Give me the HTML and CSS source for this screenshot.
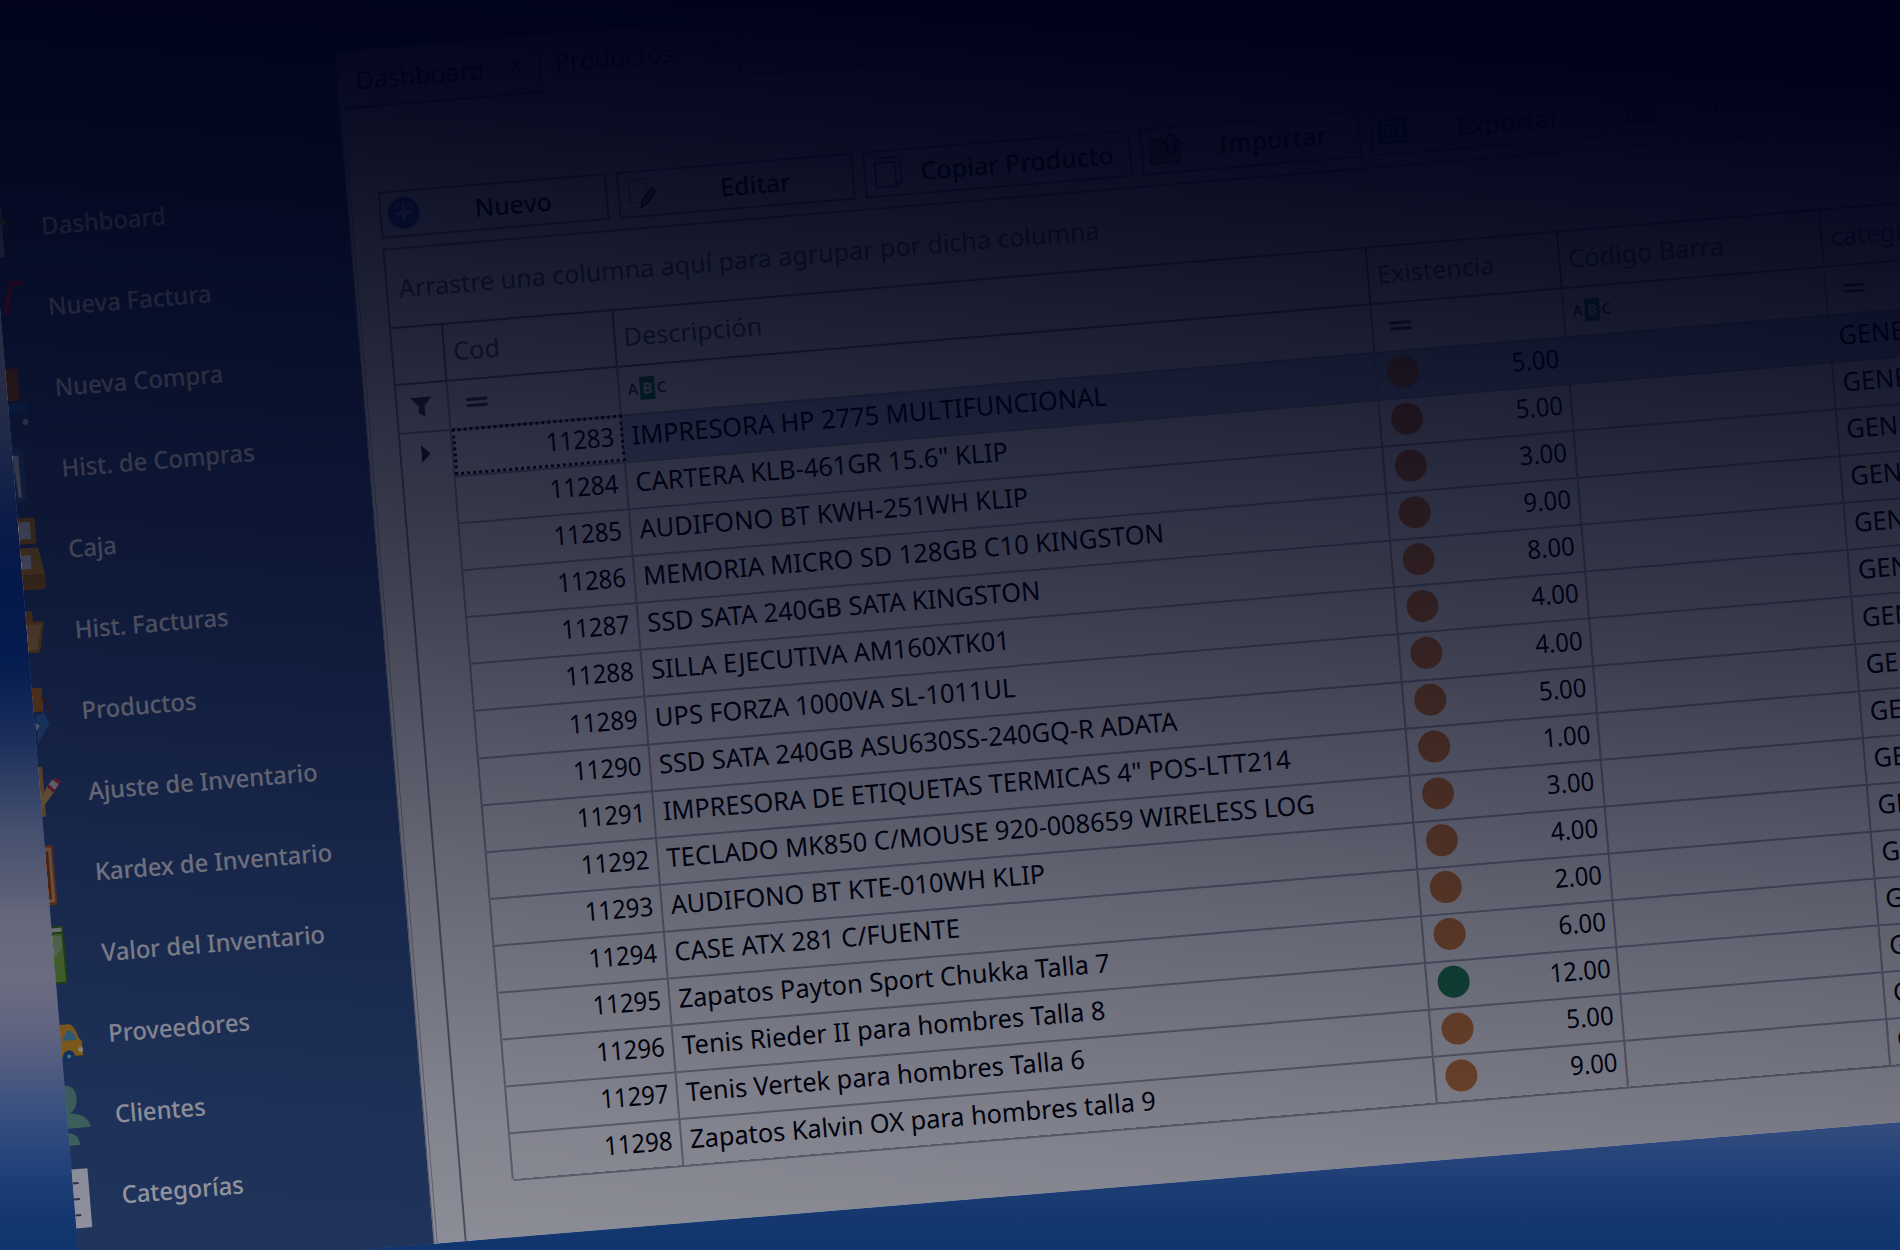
FILE: index.html
```html
<!DOCTYPE html>
<html lang="es">
<head>
<meta charset="utf-8">
<title>Productos</title>
<link rel="stylesheet" href="styles.css">
</head>
<body>
<div class="stage">
<div class="frame">
  <nav class="sidebar">
    <a class="item"><svg class="ico" viewBox="0 0 30 60"><path fill="#d5d9e2" d="M0 6h9v52H0z"/><path fill="#9aa638" d="M0 17l4-3 11 10-3 4-12-10z"/></svg><span>Dashboard</span></a>
    <a class="item"><svg class="ico" viewBox="0 0 30 60"><path fill="none" stroke="#f0303a" stroke-width="5" d="M24 4H13L5 34"/></svg><span>Nueva Factura</span></a>
    <a class="item"><svg class="ico" viewBox="0 0 30 60"><path fill="#c86e14" d="M0 8h12v32H0z"/><path fill="#2f6fc0" d="M0 42h20l-3 12H0z"/><circle cx="16" cy="62" r="3" fill="#dde"/></svg><span>Nueva Compra</span></a>
    <a class="item"><svg class="ico" viewBox="0 0 30 60"><path fill="#3b74ac" d="M0 6h11v54H0z"/><path fill="#eef" d="M0 14h6v42H3z"/></svg><span>Hist. de Compras</span></a>
    <a class="item"><svg class="ico" viewBox="0 0 30 60"><path fill="#d08a20" d="M0-4h17v26H0z"/><path fill="#e8ecf5" d="M0 0h12v17H0z"/><path fill="#d9992c" d="M0 26h18l5 27H0z"/><path fill="#e8ecf5" d="M0 33h10v14H0z"/><path fill="#b87818" d="M0 53h23v11q0 4-4 4H0z"/></svg><span>Caja</span></a>
    <a class="item"><svg class="ico" viewBox="0 0 30 60"><path fill="#c8811c" d="M0 8h7v12H0zM0 19h18l-6 29q-1 2-3 2H0z"/><path fill="#e8a850" d="M0 22h15l-6 25H0z"/></svg><span>Hist. Facturas</span></a>
    <a class="item"><svg class="ico" viewBox="0 0 30 60"><path fill="#d9821c" d="M0 4h10v24H0z"/><path fill="none" stroke="#7a3c30" stroke-width="2" d="M9 14q9 3 6 14"/><path fill="#3f83cc" d="M2 32l8-3 5 12-13 18z"/><path fill="#e8eef5" d="M1 39l4 3-4 5z"/></svg><span>Productos</span></a>
    <a class="item"><svg class="ico" viewBox="0 0 30 60"><path fill="#dca04a" d="M0 2h4v50H0z"/><path fill="#e8bb5a" d="M0 34l8-13 7 6L2 42z"/><path fill="#d83a3a" d="M7 22l9-8 6 5-9 10z"/><path fill="#e8e8ee" d="M9 20l4-4 6 5-4 5z"/></svg><span>Ajuste de Inventario</span></a>
    <a class="item"><svg class="ico" viewBox="0 0 30 60"><path fill="#b5651c" d="M0 0h8v60H0z"/><path fill="#e8b060" d="M0 2h6v55H0z"/><path fill="#a04818" d="M0 6h3v48H0z"/></svg><span>Kardex de Inventario</span></a>
    <a class="item"><svg class="ico" viewBox="0 0 30 60"><path fill="#3f7a1c" d="M0 0h12v58H0z"/><path fill="#84b83c" d="M0 8h10v48H0z"/><path fill="#dfe8d5" d="M0 2h10v4H0z"/><path fill="#a8c880" d="M0 10h9v12L0 33z"/></svg><span>Valor del Inventario</span></a>
    <a class="item"><svg class="ico" viewBox="0 0 30 60"><path fill="#eda41c" d="M0 18h9q5 0 9 14l3 4v14H0z"/><path fill="#5aa8c0" d="M1 34l6-10h3q4 2 6 10z"/><circle cx="7" cy="50" r="6" fill="#1c5a9c"/><circle cx="7" cy="50" r="2" fill="#9cc"/><circle cx="19" cy="44" r="2.5" fill="#fff0c0"/></svg><span>Proveedores</span></a>
    <a class="item"><svg class="ico" viewBox="0 0 30 60"><path fill="#6ca890" d="M0-2h3q8 2 8 13T3 26q18 2 20 15H0zM0 46h3q7 2 8 12H0z"/></svg><span>Clientes</span></a>
    <a class="item"><svg class="ico" viewBox="0 0 30 60"><path fill="#f4f4fc" d="M0 1h16v59H0z"/><path stroke="#4a5070" stroke-width="2" d="M0 15h6M0 31h6M0 47h6"/></svg><span>Categorías</span></a>
  </nav>
  <main class="panel">
    <div class="tabs">
      <div class="tab tab-a"><span>Dashboard</span><svg viewBox="0 0 12 14"><path d="M1 1l10 12M11 1L1 13"/></svg></div>
      <div class="tab tab-b"><span>Productos</span><svg viewBox="0 0 12 14"><path d="M1 1l10 12M11 1L1 13"/></svg></div>
      <div class="tab-rest"></div>
    </div>
    <div class="toolbar">
      <button class="btn b1"><svg viewBox="0 0 36 36"><circle cx="18" cy="18" r="17" fill="#4a7ad8"/><circle cx="18" cy="18" r="14" fill="none" stroke="#1d3f9c" stroke-width="1.5"/><path fill="#8fb0f0" stroke="#1d3f9c" stroke-width="1.5" d="M15 8h6v7h7v6h-7v7h-6v-7H8v-6h7z"/></svg><span>Nuevo</span></button>
      <button class="btn b2"><svg viewBox="0 0 36 36"><path fill="none" stroke="#8a90a8" stroke-width="1.5" d="M24 14V3H5v25h9"/><path fill="#8a7a68" stroke="#111" stroke-width="1.5" d="M16 33l2-7 11-13 4 4-11 13z"/></svg><span>Editar</span></button>
      <button class="btn b3"><svg viewBox="0 0 36 36"><path fill="none" stroke="#3a4160" stroke-width="1.5" d="M11 6V2h15l6 6v22h-6M5 7h21v26H5z"/></svg><span>Copiar Producto</span></button>
      <button class="btn b4"><svg viewBox="0 0 36 36"><path fill="#c88090" stroke="#402030" d="M2 6h14v8h17v18H2z"/><path fill="#a8b8d8" stroke="#111" stroke-width="2" d="M25 2l9 9h-5v10h-8V11h-5z"/></svg><span>Importar</span></button>
      <button class="btn b5"><svg viewBox="0 0 36 36"><path fill="none" stroke="#2a4a60" stroke-width="3" d="M3 6h28v24H3zM8 12h7v12H8zM20 12h8v12h-8z"/></svg><span>Exportar</span></button>
      <button class="btn b6"><svg viewBox="0 0 36 36"><path fill="none" stroke="#3a4050" stroke-width="3" d="M3 4h28v26H3zM9 24l8-14 8 14z"/></svg><span>Actualizar</span></button>
    </div>
    <div class="grid">
      <div class="group"><span>Arrastre una columna aquí para agrupar por dicha columna</span></div>
      <div class="row head"><div></div><div><span>Cod</span></div><div><span>Descripción</span></div><div><span>Existencia</span></div><div><span>Código Barra</span></div><div><span>categoria</span></div></div>
      <div class="row filter">
        <div><svg class="funnel" viewBox="0 0 22 20"><path d="M0 0h22l-8 9v11l-6-4V9z"/></svg></div>
        <div><b class="eq"></b></div>
        <div><b class="abc">A<em>B</em>C</b></div>
        <div><b class="eq"></b></div>
        <div><b class="abc">A<em>B</em>C</b></div>
        <div><b class="eq"></b></div>
      </div>
      <div class="body" id="rows"></div>
    </div>
  </main>
  <div class="shade"></div>
</div>
</div>
<script src="rows.js"></script>
</body>
</html>
```
FILE: rows.js
```js
const products = [
  ['IMPRESORA HP 2775 MULTIFUNCIONAL', '5.00'],
  ['CARTERA KLB-461GR 15.6" KLIP', '5.00'],
  ['AUDIFONO BT KWH-251WH KLIP', '3.00'],
  ['MEMORIA MICRO SD 128GB C10 KINGSTON', '9.00'],
  ['SSD SATA 240GB SATA KINGSTON', '8.00'],
  ['SILLA EJECUTIVA AM160XTK01', '4.00'],
  ['UPS FORZA 1000VA SL-1011UL', '4.00'],
  ['SSD SATA 240GB ASU630SS-240GQ-R ADATA', '5.00'],
  ['IMPRESORA DE ETIQUETAS TERMICAS 4" POS-LTT214', '1.00'],
  ['TECLADO MK850 C/MOUSE 920-008659 WIRELESS LOG', '3.00'],
  ['AUDIFONO BT KTE-010WH KLIP', '4.00'],
  ['CASE ATX 281 C/FUENTE', '2.00'],
  ['Zapatos Payton Sport Chukka Talla 7', '6.00'],
  ['Tenis Rieder II para hombres Talla 8', '12.00'],
  ['Tenis Vertek para hombres Talla 6', '5.00'],
  ['Zapatos Kalvin OX para hombres talla 9', '9.00'],
];
document.getElementById('rows').innerHTML = products.map(([name, stock], i) => `
  <div class="row data${i === 0 ? ' selected' : ''}">
    <div class="mark">${i === 0 ? '<svg viewBox="0 0 9 18"><path d="M0 0l9 9-9 9z"/></svg>' : ''}</div>
    <div class="cod"><span>${11283 + i}</span></div>
    <div class="desc"><span>${name}</span></div>
    <div class="stock"><i class="dot${parseFloat(stock) > 10 ? ' ok' : ''}"></i><span>${stock}</span></div>
    <div></div>
    <div class="cat"><span>GENERAL</span></div>
  </div>`).join('');
```
FILE: styles.css
```css
* { box-sizing: border-box; }

body {
  margin: 0;
  overflow: hidden;
  font-family: "Noto Sans", "Open Sans", sans-serif;
  font-size: 25px;
  color: #000;
}

.stage {
  width: 1900px;
  height: 1250px;
  overflow: hidden;
  background: linear-gradient(180deg,
    #00021a 0, #00031c 80px, #1c2036 260px, #2a2d40 340px, #1f2a48 430px,
    #0c1c48 520px, #04194a 580px, #051c4e 660px, #1c2f5c 740px, #44506e 830px,
    #66677b 920px, #6c6c80 980px, #5c6280 1040px, #3f5380 1100px,
    #24437a 1160px, #14386f 1210px, #10346c 1250px);
}

.frame {
  position: relative;
  display: flex;
  width: 1975px;
  height: 1296px;
  margin: -48px 0 0 -20px;
  transform-origin: 355px 100px;
  transform: rotate(-4.74deg);
  background: #36568a;
  overflow: hidden;
}

.frame span {
  display: inline-block;
  white-space: nowrap;
  transform-origin: 0 50%;
}

.shade {
  position: absolute;
  inset: 0;
  background: linear-gradient(189deg,
    rgb(0 3 26) 0, rgb(0 3 26) 17.5%, rgb(0 3 26 / .96) 25.5%, rgb(0 3 26 / .85) 41%,
    rgb(0 3 26 / .74) 55%, rgb(0 3 26 / .585) 72%, rgb(0 3 26 / .46) 88%, rgb(0 3 26 / .4) 100%);
}

.sidebar {
  flex: 0 0 355px;
  padding-top: 208px;
}

.item {
  display: flex;
  align-items: center;
  height: 81px;
  color: #fff;
  font-size: 24.5px;
  font-weight: 500;
}

.ico {
  width: 30px;
  height: 60px;
  margin-right: 18px;
  overflow: visible;
}

.item span { transform: scaleX(.97); }

.panel {
  flex: 1;
  margin-top: 100px;
  background: #f0f0f0;
  border-left: 4px double #a8a8b0;
}

.tabs {
  display: flex;
  height: 58px;
  border-top: 1px solid #c0c0c8;
}

.tab {
  display: flex;
  justify-content: space-between;
  align-items: center;
  padding: 0 17px 0 14px;
  border-right: 2px solid #666977;
}

.tab svg { width: 13px; height: 15px; stroke: #222; stroke-width: 2; }
.tab-a { width: 200px; border-bottom: 2px solid #666977; background: #dcdce2; }
.tab-b { width: 199px; padding-bottom: 4px; }
.tab-rest { flex: 1; border-bottom: 2px solid #666977; }

.toolbar {
  display: flex;
  gap: 10px;
  margin: 85px 0 10px 27px;
}

.btn {
  display: flex;
  align-items: center;
  height: 47px;
  padding: 0 0 1px 5px;
  border: 2px solid #777a88;
  background: #f0f0f4;
  font: inherit;
  font-weight: 500;
  flex: none;
}

.btn svg { width: 34px; height: 34px; flex: none; }
.btn span { flex: 1; text-align: center; }
.b1 { width: 229px; }
.b2 { width: 237px; }
.b3 { width: 268px; }
.b4 { width: 220px; }
.b4 span { padding: 0 0 4px 6px; }
.b5 { width: 238px; }
.b6 { width: 238px; }

.grid {
  margin-left: 27px;
  height: 1000px;
  border-left: 2px solid #85868f;
  border-top: 2px solid #85868f;
}

.group {
  display: flex;
  align-items: center;
  height: 77px;
  padding: 0 0 1px 11px;
  color: #5a5c66;
}

.group span { transform: scaleX(1.005); }

.row {
  display: grid;
  grid-template-columns: 52px 171px 756px 192px 263px 200px;
}

.row > div {
  display: flex;
  align-items: center;
  border-right: 2px solid #a0a1aa;
  border-top: 2px solid #a0a1aa;
}

.head { height: 57px; color: #5a5c66; }
.head > div { padding: 0 0 3px 8px; }
.head span { transform: scaleX(1.01); }
.row.head > div, .row.filter > div { border-top-color: #777883; }
.row.head > div { border-right-color: #777883; }

.filter { height: 49px; }
.filter > div { padding: 0 0 2px 17px; }
.filter > div:first-child { padding-left: 13px; }
.funnel { width: 22px; height: 20px; fill: #44454f; }
.eq { width: 21px; height: 9px; border: solid #4a4b56; border-width: 3px 0; }

.abc {
  display: flex;
  align-items: center;
  gap: 2px;
  margin-left: -9px;
  font-size: 15px;
  font-weight: 600;
  line-height: 23px;
  color: #44454f;
}

.abc em {
  width: 15px;
  text-align: center;
  font-style: normal;
  color: #fff;
  background: #0f8a50;
}

.data { height: 47.08px; font-size: 26px; }
.row > .mark { border-top: 0; }
.row.selected > .mark { border-top: 2px solid #a0a1aa; padding: 0 0 4px 20px; }
.data:last-child > div:not(.mark) { box-shadow: 0 2px #a0a1aa; }
.mark svg { width: 9px; height: 18px; fill: #333440; }
.row > .cod { justify-content: flex-end; padding-right: 8px; }
.row > .desc, .row > .cat { padding-left: 8px; }
.data span { margin-top: -7px; line-height: 34px; transform: scaleX(.977); }
.frame .cod span, .frame .stock span { transform-origin: 100% 50%; transform: scaleX(.92); }
.stock { justify-content: space-between; padding: 0 7px 0 10px; }
.dot { width: 32px; height: 32px; margin-top: -6px; border-radius: 50%; background: #cf7c38; }
.dot.ok { background: #1f8050; }
.selected > div { background: #a2bbd2; }
.selected > .mark, .selected > .cod { background: none; }
.row.selected > .cod { outline: 3px dotted #111; outline-offset: -3px; }
```
